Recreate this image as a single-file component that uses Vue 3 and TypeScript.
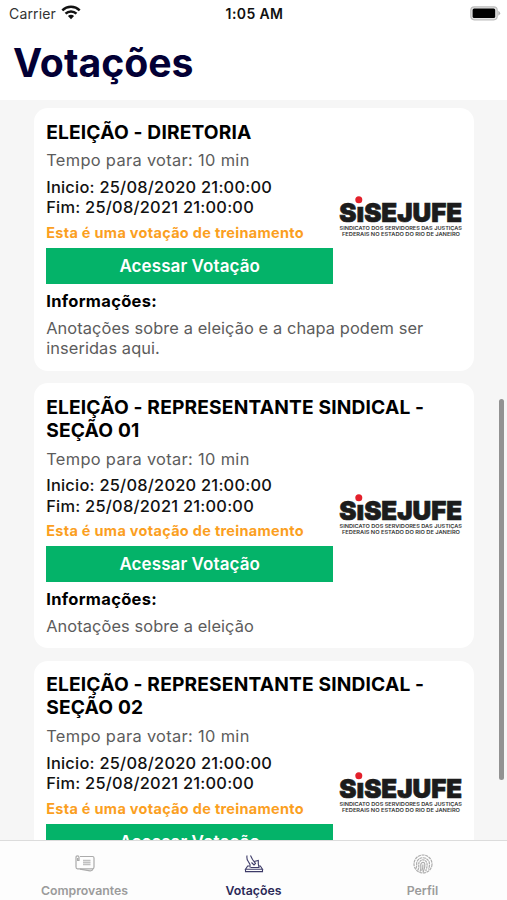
<script setup lang="ts">
interface Election {
  title: string[]
  notes: string[]
}

const elections: Election[] = [
  {
    title: ['ELEIÇÃO - DIRETORIA'],
    notes: ['Anotações sobre a eleição e a chapa podem ser', 'inseridas aqui.'],
  },
  {
    title: ['ELEIÇÃO - REPRESENTANTE SINDICAL -', 'SEÇÃO 01'],
    notes: ['Anotações sobre a eleição'],
  },
  {
    title: ['ELEIÇÃO - REPRESENTANTE SINDICAL -', 'SEÇÃO 02'],
    notes: ['Anotações sobre a eleição'],
  },
]
</script>

<template>
  <div class="screen">
    <header class="top">
      <div class="status">
        <div class="carrier">
          <span>Carrier</span>
          <svg class="wifi" width="20" height="15" viewBox="0 0 20 15">
            <g fill="none" stroke="#111" stroke-width="2.5">
              <path d="M1.3 5.3C6.2.7 13.8.7 18.7 5.3" />
              <path d="M4.5 8.7C7.6 5.8 12.4 5.8 15.5 8.7" />
            </g>
            <path d="M6.9 11C8.6 9.3 11.4 9.3 13.1 11L10 14.2Z" fill="#111" />
          </svg>
        </div>
        <span class="time">1:05 AM</span>
        <svg class="battery" width="31" height="15" viewBox="0 0 31 15">
          <rect x=".8" y=".8" width="26.4" height="13" rx="3.5" fill="#e4e4e4" stroke="#bdbdbd" stroke-width="1.2" />
          <rect x="2.6" y="2.6" width="22.6" height="9.4" rx="1.5" fill="#000" />
          <path d="M28.3 4.8Q32 7.3 28.3 9.8Z" fill="#b0b0b0" />
        </svg>
      </div>
      <h1>Votações</h1>
    </header>

    <main class="list">
      <article v-for="(item, i) in elections" :key="i" class="card">
        <h2><span v-for="line in item.title" :key="line">{{ line }}</span></h2>
        <div class="body">
          <div class="details">
            <p class="duration">Tempo para votar: 10 min</p>
            <p class="date">Inicio: 25/08/2020 21:00:00</p>
            <p class="date">Fim: 25/08/2021 21:00:00</p>
            <p class="training">Esta é uma votação de treinamento</p>
            <button type="button">Acessar Votação</button>
          </div>
          <svg class="logo" width="125" height="44" viewBox="0 0 125 44">
            <text class="brand" x=".3" y="27.2" textLength="122.8" lengthAdjust="spacingAndGlyphs">SıSEJUFE</text>
            <circle cx="19.8" cy="4.8" r="3.5" fill="#e3202b" />
            <text class="tag" x=".5" y="34.6" textLength="122.5" lengthAdjust="spacingAndGlyphs">SINDICATO DOS SERVIDORES DAS JUSTIÇAS</text>
            <text class="tag" x="3" y="41.4" textLength="118" lengthAdjust="spacingAndGlyphs">FEDERAIS NO ESTADO DO RIO DE JANEIRO</text>
          </svg>
        </div>
        <h3>Informações:</h3>
        <p class="notes"><span v-for="line in item.notes" :key="line">{{ line }}</span></p>
      </article>
      <div class="scrollbar"></div>
    </main>

    <nav class="tabs">
      <div class="tab">
        <svg width="22" height="20" viewBox="0 0 22 20" fill="none" stroke="#ababab" stroke-width="1.2">
          <path d="M6 2.5H18.5Q20 2.5 20 4V13Q20 14.8 18.5 14.8H3.5Q2 14.8 2 13V5" />
          <path d="M6 15.2L16 16.8Q18.5 17 19 14.8" />
          <path d="M2 5V3.5Q2 1.8 3.5 1.8T5 3.5V6.5H3.6V4" />
          <path d="M9 6.5H16.5M9 8.5H16.5M9 10.5H16.5" stroke-width="1.3" opacity=".75" />
        </svg>
        <span>Comprovantes</span>
      </div>
      <div class="tab active">
        <svg width="22" height="20" viewBox="0 0 22 20" fill="none" stroke="#3d3b68" stroke-width="1.1">
          <path d="M4 1.5Q3.5 5 5 7L7 10.5V13.5M7.5 1.5L9.5 5.5L12.5 9.5L11 11L8.5 8.5" />
          <path d="M11 7.500L15.3 6.5V10L16 13.5H7.5" />
          <path d="M6.5 12H4.7L2.5 15.3H19.5L17.3 12H16" />
          <path d="M2.5 15.3V17.6H19.5V15.3" />
        </svg>
        <span>Votações</span>
      </div>
      <div class="tab">
        <svg width="22" height="20" viewBox="0 0 22 20" fill="none" stroke="#adadad" stroke-width="1.2">
          <circle cx="11" cy="10" r="9" stroke-dasharray="3 .7" />
          <path d="M4 14.5C5.5 11 3.8 9.5 5.3 7C8 2.5 14.5 2.7 16.8 7.3C18 10 17.5 12.5 16.5 15.5" stroke-dasharray="3 .6" />
          <path d="M5.7 16.5C8 12.5 5.7 10.5 7.3 8C9.5 4.7 13.5 5.5 14.7 8.5C15.7 11.5 14.6 14.5 13.7 17.3" stroke-dasharray="2.5 .6" />
          <path d="M8 17.8C10 14 8 12 9 9.7C10 7.7 12.4 8 12.8 10C13.3 13 12 15.5 11 18.5M10.9 10.5Q11.2 14 9.7 17" />
        </svg>
        <span>Perfil</span>
      </div>
    </nav>
  </div>
</template>

<style>
body {
  margin: 0;
  overflow: hidden;
}
</style>

<style scoped>
.screen {
  width: 507px;
  height: 900px;
  display: flex;
  flex-direction: column;
  background: #f6f6f6;
  font-family: Inter, "Liberation Sans", sans-serif;
  color: #000;
  overflow: hidden;
}
h1, h2, h3, p {
  margin: 0;
}
.top {
  height: 100px;
  flex: none;
  background: #fff;
}
.status {
  height: 27px;
  display: grid;
  grid-template-columns: 1fr auto 1fr;
  align-items: center;
  padding: 0 6px 0 9px;
  font-size: 14px;
  line-height: 27px;
}
.carrier {
  display: flex;
  align-items: center;
  gap: 5px;
  color: #333;
  letter-spacing: 0.15px;
}
.wifi {
  margin-top: -2px;
}
.time {
  margin-right: 1px;
  font-weight: 600;
  letter-spacing: 0.4px;
  color: #111;
}
.battery {
  justify-self: end;
  margin-top: -1px;
}
h1 {
  margin: 11px 0 0 13px;
  font-size: 39.2px;
  line-height: 50px;
  font-weight: 700;
  color: #030035;
  white-space: nowrap;
}
.list {
  flex: 1;
  min-height: 0;
  position: relative;
  display: flex;
  flex-direction: column;
  gap: 12.3px;
  padding: 8px 33px 0 34px;
  overflow: hidden;
}
.card {
  flex: none;
  box-sizing: border-box;
  padding: 12.6px 12.2px 12px;
  border-radius: 14px;
  background: #fff;
}
.card span {
  display: block;
  white-space: nowrap;
}
h2 {
  font-size: 19.2px;
  line-height: 23.2px;
  font-weight: 700;
  letter-spacing: 0.16px;
}
.body {
  display: flex;
  align-items: center;
  margin-top: 6.6px;
}
.details {
  width: 287px;
  flex: none;
  white-space: nowrap;
}
.logo {
  flex: none;
  margin-left: 5.5px;
}
.brand {
  font-size: 26.2px;
  font-weight: 900;
  fill: #1c1c1c;
  stroke: #1c1c1c;
  stroke-width: 0.7px;
}
.tag {
  font-size: 5.4px;
  font-weight: 600;
  fill: #333;
}
.duration,
.notes {
  font-size: 16.4px;
  line-height: 20.5px;
  color: #5c5c5c;
}
.notes {
  letter-spacing: 0.09px;
}
.duration {
  margin-bottom: 6px;
  letter-spacing: 0.33px;
}
.date {
  font-size: 16.4px;
  line-height: 20.5px;
  font-weight: 500;
  letter-spacing: 0.24px;
  color: #111;
}
.training {
  margin: 6.2px 0 5.8px;
  font-size: 14.5px;
  line-height: 18px;
  font-weight: 700;
  letter-spacing: 0.3px;
  color: #fba01f;
}
button {
  display: block;
  width: 100%;
  height: 36.4px;
  padding: 0;
  border: 0;
  background: #04b369;
  color: #fff;
  font: 600 17px Inter, "Liberation Sans", sans-serif;
  letter-spacing: 0.08px;
}
h3 {
  margin: 6.4px 0 7px;
  font-size: 16.5px;
  line-height: 20px;
  font-weight: 700;
  letter-spacing: 0.32px;
}
.scrollbar {
  position: absolute;
  right: 3px;
  top: 299px;
  width: 5px;
  height: 381px;
  border-radius: 3px;
  background: #929292;
}
.tabs {
  height: 59px;
  flex: none;
  border-top: 1px solid #dcdcdc;
  background: #fdfdfd;
  display: grid;
  grid-template-columns: repeat(3, 1fr);
}
.tab {
  display: flex;
  flex-direction: column;
  align-items: center;
  padding-top: 13px;
  font-size: 12.3px;
  line-height: 16px;
  font-weight: 600;
  color: #9b9b9b;
}
.tab span {
  margin-top: 9px;
}
.tab.active {
  color: #2b2957;
}
</style>
